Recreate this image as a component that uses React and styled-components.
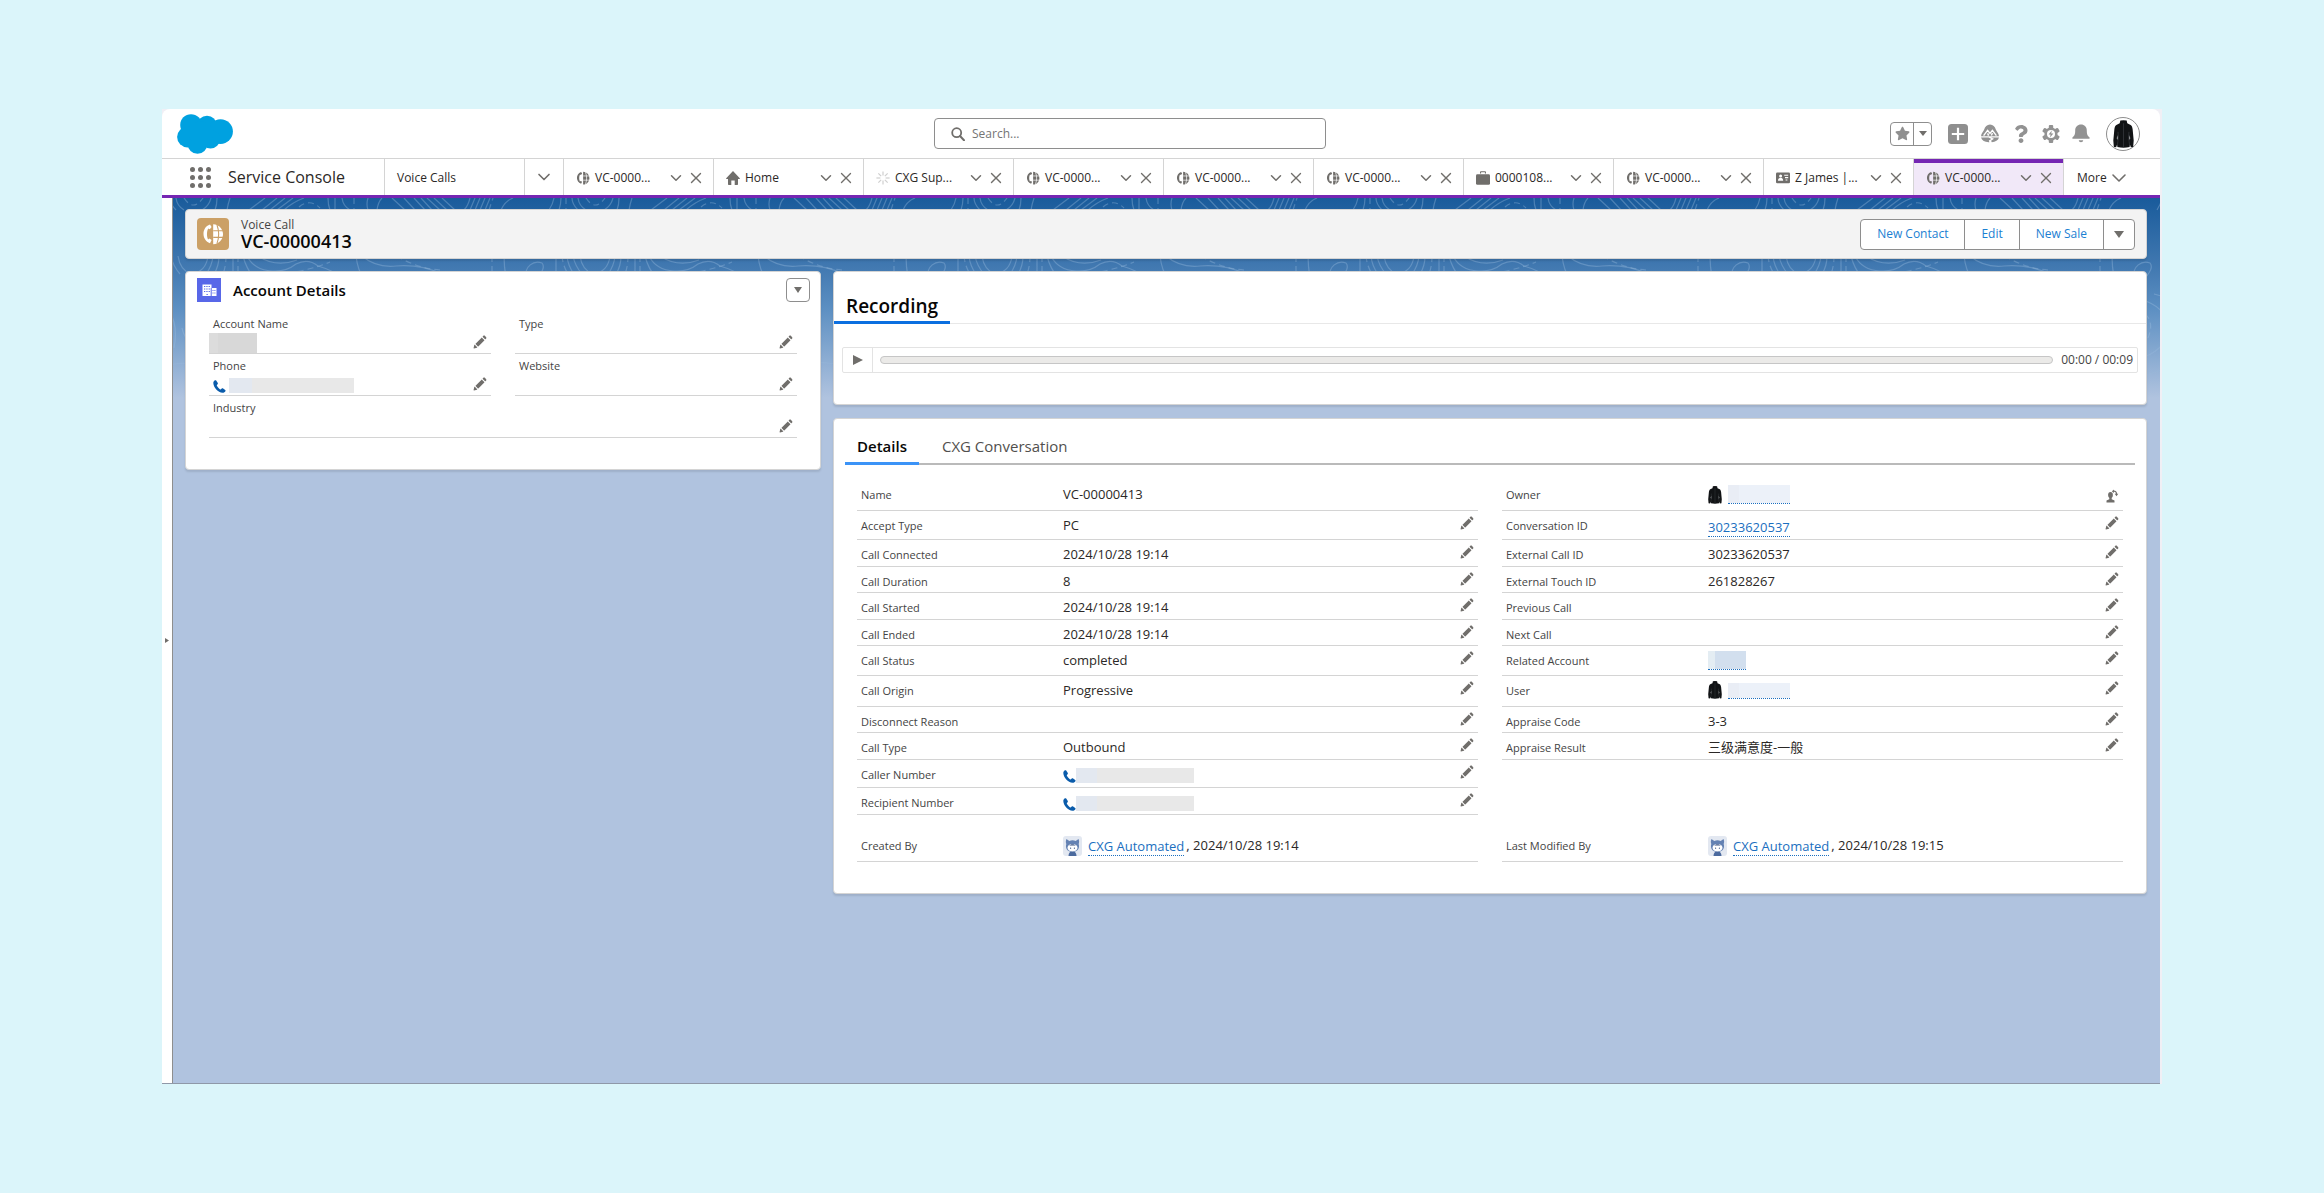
import React from 'react'
import styled, { createGlobalStyle, css } from 'styled-components'
import { ChevronDown, X } from 'lucide-react'
import { FaStar, FaQuestion } from 'react-icons/fa'

const BORDER_COLOR = '#d4d4d4'
const BRAND_PURPLE = '#7526b3'
const LINK_COLOR = '#1b6fc0'
const ICON_COLOR = '#706e6b'

const GlobalStyle = createGlobalStyle`
  * {
    box-sizing: border-box;
  }

  body {
    margin: 0;
    background: #dbf5fa;
    color: #2b2826;
    font-family: 'Open Sans', 'Noto Sans CJK SC', sans-serif;
    font-size: 13px;
    line-height: 18px;
  }

  button,
  input {
    font: inherit;
    color: inherit;
  }

  button {
    padding: 0;
    border: 0;
    background: none;
    cursor: pointer;
  }

  h1,
  h2,
  p,
  dl,
  dd {
    margin: 0;
  }

  svg {
    display: block;
    flex: none;
  }
`

/* icons */

function PencilIcon() {
  return (
    <svg width="14" height="14" viewBox="0 0 52 52" fill={ICON_COLOR}>
      <path d="M9.5 33.4l8.9 8.9c.4.4 1 .4 1.4 0L42 20c.4-.4.4-1 0-1.4l-8.8-8.8c-.4-.4-1-.4-1.4 0L9.5 32.1c-.4.4-.4 1 0 1.3z" />
      <path d="M36.1 5.7c-.4.4-.4 1 0 1.4l8.8 8.8c.4.4 1 .4 1.4 0l2.5-2.5c1.600-1.500 1.600-3.900 0-5.500l-4.700-4.700c-1.600-1.600-4.100-1.600-5.700 0z" />
      <path d="M2.100 48.200c-.2 1 .7 1.900 1.700 1.700l10.900-2.600c.4-.1.7-.3.9-.5.4-.4.5-1.100.1-1.500l-9-9c-.4-.4-1.100-.3-1.500.1-.3.300-.4.600-.5.900z" />
    </svg>
  )
}

function ChangeOwnerIcon() {
  return (
    <svg width="14" height="18" viewBox="0 -4 13 18" fill={ICON_COLOR}>
      <ellipse cx="5" cy="6" rx="2.4" ry="3" />
      <path d="M3.8 8h2.4v2.2L9 11.4V13.6H1v-2.2l2.8-1.2z" />
      <path
        d="M7.4 2.2C9.8 1.6 11 3 11 5"
        fill="none"
        stroke={ICON_COLOR}
        strokeWidth="1.3"
      />
      <path d="M9.2 4.8h3.6L11 7.2zM6.4 2.4L8.4.6v3.4z" />
    </svg>
  )
}

function VoiceCallIcon({ size = 32, color = '#fff', line = '#cba066' }) {
  return (
    <svg width={size} height={size} viewBox="5 5 22 22">
      <path
        d="M13 6.5C8.500 8 6.400 12 6.500 16c.1 4 2.300 7.600 6.500 9.200l1.600-3.200-2.200-1.400-1.300.8c-1.500-2.400-1.500-8.400.2-10.800l1.500.6 1.800-2.200z"
        fill={color}
      />
      <path d="M16.200 6.200c6 .4 9.800 5 9.800 10s-3.800 9.800-9.800 10z" fill={color} />
      <path
        d="M20 7c2.200 6 2.200 12.500 0 18.400M16.200 12.800h9.800M16.200 19.400h9.800"
        fill="none"
        stroke={line}
        strokeWidth="1.100"
      />
    </svg>
  )
}

function HomeIcon() {
  return (
    <svg width="14" height="14" viewBox="0 0 14 14" fill={ICON_COLOR}>
      <path d="M7 0L.2 7.200c-.3.400-.1.700.3.700H2v5.400c0 .4.300.7.700.7h2.600V9.400h3.400V14h2.600c.4 0 .7-.3.7-.7V7.900h1.500c.4 0 .6-.3.300-.7z" />
    </svg>
  )
}

function SpinnerIcon() {
  return (
    <svg width="14" height="14" viewBox="0 0 14 14" stroke="#cfcfcf" strokeWidth="1.200">
      {[0, 45, 90, 135, 180, 225, 270, 315].map(angle => (
        <path key={angle} d="M7 .4v4" transform={`rotate(${angle} 7 7)`} />
      ))}
    </svg>
  )
}

function CaseIcon() {
  return (
    <svg width="14" height="14" viewBox="0 0 14 14" fill={ICON_COLOR}>
      <path d="M4 2.400V1.400C4 .700 4.500.2 5.200.2h3.600c.7 0 1.200.5 1.200 1.200v1H8.900V1.300H5.100v1.100z" />
      <rect y="3.200" width="14" height="10.600" rx="1.400" />
    </svg>
  )
}

function ContactIcon() {
  return (
    <svg width="14" height="14" viewBox="0 0 14 14">
      <rect y="1.600" width="14" height="10.600" rx="1.200" fill={ICON_COLOR} />
      <circle cx="4.600" cy="5" r="1.500" fill="#fff" />
      <path d="M2 9.800c0-2 1.200-3 2.600-3s2.600 1 2.600 3z" fill="#fff" />
      <path d="M8.200 4.200h4M9 6.600h3.200M9.600 9h1.800" stroke="#fff" strokeWidth="1.100" />
    </svg>
  )
}

function PhoneIcon() {
  return (
    <svg width="13" height="13" viewBox="0 0 13 13" fill="#0b5cab">
      <path d="M2.200.3C1.200.6.3 1.700.3 3c.3 4.800 4.600 9.500 9.300 9.700 1.300 0 2.500-.8 2.900-1.800.1-.4 0-.7-.3-.9L9.800 8.300c-.3-.2-.7-.2-1 .1l-1 .9c-.2.200-.5.200-.7.100C5.600 8.500 4.400 7 3.800 5.600c-.1-.3 0-.5.200-.7l.7-.8c.3-.3.300-.6.100-1L3.200.600C3 .3 2.600.2 2.200.3z" />
    </svg>
  )
}

function JacketIcon({ width = 14, height = 18 }) {
  return (
    <svg width={width} height={height} viewBox="0 0 20 26" preserveAspectRatio="none">
      <path
        d="M7 .5Q10 -.2 13 .5l.6 2.600 3.200 1.500c1.300.8 1.600 2.200 1.900 4l1 10.400-.5 6-2.200.4-.9-2.600-.3 2.200c-3.800.9-7.800.9-11.600 0l-.3-2.200-.9 2.600-2.200-.4-.5-6 1-10.400c.3-1.800.6-3.200 1.900-4l3.200-1.500z"
        fill="#111315"
      />
      <path
        d="M10 3v22M4.800 11c.3 4 .1 8-.6 12M15.200 11c-.3 4-.1 8 .6 12"
        fill="none"
        stroke="#3d4145"
        strokeWidth=".6"
      />
      <path d="M3.400 17l1.400-3v4.500zM16.600 17l-1.400-3v4.500z" fill="#8a8c8e" />
    </svg>
  )
}

function AstroIcon() {
  return (
    <svg width="19" height="20" viewBox="0 0 19 20">
      <rect width="19" height="20" rx="3" fill="#e3e8f1" />
      <path
        d="M3.500 3l2.800 2c2-.9 4.400-.9 6.400 0l2.800-2c.8 1.400.8 3.400.2 5 1.200 4-.8 8-6.200 8s-7.400-4-6.200-8c-.6-1.600-.6-3.600.2-5z"
        fill="#6482b3"
      />
      <path d="M5.500 20c0-3 1.600-5 4-5s4 2 4 5z" fill="#4b6a9e" />
      <ellipse cx="9.500" cy="11.800" rx="5" ry="3.800" fill="#fff" />
      <path d="M6 9.600c2-1 2-1.400 3.500-1.400s1.500.4 3.500 1.400z" fill="#3d5684" />
      <circle cx="7.600" cy="12.200" r=".6" fill="#3d5684" />
      <circle cx="11.400" cy="12.200" r=".6" fill="#3d5684" />
    </svg>
  )
}

function CloudLogo() {
  return (
    <svg width="56" height="40" viewBox="0 0 56 40" fill="#00a1e0">
      <circle cx="14" cy="11" r="10.800" />
      <circle cx="30" cy="11.500" r="9.800" />
      <circle cx="43.500" cy="17.600" r="12.400" />
      <circle cx="10.500" cy="23" r="10.400" />
      <circle cx="20.500" cy="30" r="9.800" />
      <circle cx="33.500" cy="25" r="9.500" />
      <circle cx="24" cy="19" r="12" />
    </svg>
  )
}

function WaffleIcon() {
  const steps = [2.5, 10.5, 18.5]
  return (
    <svg width="21" height="21" viewBox="0 0 21 21" fill={ICON_COLOR}>
      {steps.map(y => steps.map(x => <circle key={`${x}-${y}`} cx={x} cy={y} r="2.500" />))}
    </svg>
  )
}

function TrailheadIcon() {
  return (
    <svg width="20" height="19" viewBox="0 0 20 19">
      <path
        d="M1 12.200C1.400 9 3.400 7.800 4.200 5.600 5 3 7 .6 10 .6s5 2.400 5.800 5c.8 2.200 2.800 3.400 3.200 6.600z"
        fill="#929292"
      />
      <path
        d="M3.600 11.600l4-5.200 2.400 3 2.400-3 4 5.200M7.600 9.400l1 2.200M12.400 9l-1 2.400"
        fill="none"
        stroke="#fff"
        strokeWidth="1.400"
      />
      <path d="M1 13.600h7.600l2.800 1.400-2.600 1.600.6 1.600C5 18.400 2 16.800 1 13.600z" fill="#929292" />
      <path d="M11 13.600h8c-.8 2.800-3.600 4.600-7.200 4.700l-.7-1.500 2.900-2z" fill="#929292" />
    </svg>
  )
}

function SetupIcon() {
  return (
    <svg width="18" height="18" viewBox="0 0 18 18">
      {[0, 60, 120, 180, 240, 300].map(angle => (
        <rect
          key={angle}
          x="6.800"
          width="4.400"
          height="5"
          rx="1"
          fill="#929292"
          transform={`rotate(${angle} 9 9)`}
        />
      ))}
      <circle cx="9" cy="9" r="6.600" fill="#929292" />
      <circle cx="9" cy="9" r="4" fill="#fff" />
      <path d="M9.800 5.600L6.600 9.600h2L8 12.400l3.400-4H9.200z" fill="#929292" />
    </svg>
  )
}

function BellIcon() {
  return (
    <svg width="18" height="19" viewBox="0 0 18 19" fill="#929292">
      <path d="M9 .6C5.600.6 3.200 3 3.200 6.400c0 4.200-1 5.600-2.600 6.800-.4.400-.3 1.600.4 1.600h16c.7 0 .8-1.200.4-1.600-1.600-1.200-2.600-2.600-2.600-6.800C14.800 3 12.400.6 9 .6z" />
      <path d="M6.800 16.200h4.400c0 1.200-1 2-2.200 2s-2.200-.8-2.200-2z" />
    </svg>
  )
}

function PlusSquareIcon() {
  return (
    <svg width="20" height="20" viewBox="0 0 20 20">
      <rect width="20" height="20" rx="3.500" fill="#8f8f8f" />
      <path d="M10 3.800v12.400M3.800 10h12.400" stroke="#fff" strokeWidth="2.200" />
    </svg>
  )
}

function AccountIcon() {
  return (
    <svg width="15" height="13" viewBox="0 0 15 13">
      <path d="M.5.500h9v3.500h5V12H.5z" fill="#fff" />
      <path d="M9.200 4v8.500" stroke="#5867e8" strokeWidth="1" />
      <path
        d="M2 2.500h1.300M4.300 2.500h1.300M6.600 2.500h1.300M2 5h1.300M4.300 5h1.300M6.600 5h1.300M2 7.500h1.300M4.300 7.500h1.300M6.600 7.500h1.300M10.500 6.500h1M12.400 6.500h1M10.500 9h1M12.400 9h1M4.500 10.500h1.300"
        stroke="#5867e8"
        strokeWidth="1.200"
      />
    </svg>
  )
}

function SearchIcon() {
  return (
    <svg width="14" height="14" viewBox="0 0 14 14" fill="none" stroke={ICON_COLOR}>
      <circle cx="5.700" cy="5.700" r="4.500" strokeWidth="1.800" />
      <path d="M9 9l4 4.200" strokeWidth="2" strokeLinecap="round" />
    </svg>
  )
}

function Triangle({ direction = 'down', width = 10, height = 7 }) {
  return (
    <svg
      width={width}
      height={height}
      viewBox="0 0 10 10"
      preserveAspectRatio="none"
      fill={ICON_COLOR}
    >
      <path d={direction === 'down' ? 'M0 0h10L5 10z' : 'M0 0l10 5L0 10z'} />
    </svg>
  )
}

/* contour lines drawn behind the cards */

const ContourSvg = styled.svg`
  position: absolute;
  top: 0;
  left: 0;
  width: 100%;
  height: 200px;
`

function Contours() {
  return (
    <ContourSvg aria-hidden="true">
      <defs>
        <linearGradient id="fade" x1="0" y1="0" x2="0" y2="1">
          <stop offset="0.700" stopColor="#fff" />
          <stop offset="1" stopColor="#000" />
        </linearGradient>
        <mask id="fade-mask">
          <rect width="100%" height="200" fill="url(#fade)" />
        </mask>
        <pattern id="contour" x="325" width="402" height="200" patternUnits="userSpaceOnUse">
          <g fill="none" stroke="#9fc0e2" strokeOpacity=".36" strokeWidth="1.200">
            <path d="M3 12Q7 3 15 0M51 12Q55 6 56 0M61 12Q63 6 63 0M74 0Q74 6 80 12M80 0Q81 8 88 12M115 0Q113 8 106 12M121 0Q121 7 119 12M134 0Q132 6 131 12" />
            <path d="M153 12L169 0M166 12L181 0M174 12L189 0M181 12L197 0M188 12Q197 4 208 0M232 0Q232 7 234 12M239 0v12M246 0Q247 8 254 12M272 0Q270 6 272 12M281 12Q282 4 286 0" />
            <path d="M296 0L309 12M308 0L319 12M318 0L329 12M325 0L336 12M331 0L344 12M338 0L351 12M346 0L359 12M368 12Q372 8 374 0M374 12L379 0M379 12L384 0M384 12L389 0M389 12L394 0" />
            <path d="M6 58Q6 68 8 80M28 80C26 68 36 62 44 65C48 70 42 76 38 82M58 58v20M69 58Q70 68 76 76M75 58Q77 68 84 76M82 58Q84 72 95 76Q110 74 112 58M117 58Q116 68 110 76M123 58Q123 68 118 76M137 58v18M147 58Q150 70 158 80" />
            <path d="M151 58Q158 72 176 73Q190 74 200 66M162 58Q180 70 201 62M200 66Q212 60 222 68Q236 72 247 80M260 58Q262 74 268 80M266 58Q280 70 300 68Q324 66 346 76M409 58Q406 68 410 78" />
            <path d="M0 100C30 96 60 104 62 130S20 170 0 160M402 100C380 96 350 100 348 126S380 166 402 160M90 90C130 80 176 120 150 150S90 150 86 130M182 90C230 90 250 120 236 150S190 180 178 160" />
            <path d="M236 92C270 86 300 112 290 136S250 160 240 140M60 170C120 150 200 200 260 176S360 170 402 186M0 186C20 190 40 176 60 170M48 96C70 100 84 120 78 150" />
            <g strokeDasharray="6 4">
              <path d="M68 0v12M88 0Q97 14 107 0M203 9Q214 0 224 10M258 0v12M393 12L397 0M64 58Q65 68 70 76M130 58Q130 68 127 76M142 58v18" />
              <path d="M172 78Q210 74 234 64M301 58Q320 70 344 72M396 58v20M20 112C44 110 50 126 40 144S12 150 0 148M250 100C276 104 282 130 262 146M110 160Q160 190 220 150" />
            </g>
          </g>
        </pattern>
      </defs>
      <rect width="100%" height="200" fill="url(#contour)" mask="url(#fade-mask)" />
    </ContourSvg>
  )
}

/* shell */

const Page = styled.div`
  display: flex;
  min-height: 100vh;
  padding: 109px 162px;
`

const Frame = styled.div`
  display: flex;
  flex: 1;
  min-width: 0;
  padding-right: 2px;
  background: #f0eff5;
`

const Shell = styled.div`
  display: flex;
  flex: 1;
  flex-direction: column;
  min-width: 0;
  border-radius: 8px 8px 0 0;
  background: #fff;
`

const TopBar = styled.header`
  display: grid;
  grid-template-columns: 757fr 392px 814fr;
  align-items: center;
  height: 50px;
  padding: 0 20px 0 15px;
  border-bottom: 1px solid ${BORDER_COLOR};
`

const SearchBox = styled.label`
  display: flex;
  align-items: center;
  gap: 7px;
  height: 31px;
  padding: 0 16px;
  border: 1px solid #8e8e8e;
  border-radius: 4px;

  input {
    flex: 1;
    min-width: 0;
    padding: 0;
    border: 0;
    outline: 0;
    font-size: 12px;
  }

  input::placeholder {
    color: #747474;
    opacity: 1;
  }
`

const Actions = styled.div`
  display: flex;
  align-items: center;
  justify-content: flex-end;
  gap: 12px;
`

const Favorites = styled.div`
  display: flex;
  height: 24px;
  margin-right: 4px;
  border: 1px solid #8e8e8e;
  border-radius: 4px;

  button {
    display: flex;
    align-items: center;
    justify-content: center;
    width: 17px;
  }

  button:first-child {
    width: 23px;
    border-right: 1px solid #8e8e8e;
  }
`

const IconButton = styled.button`
  display: flex;
  align-items: center;
  justify-content: center;
`

const AvatarButton = styled(IconButton)`
  width: 34px;
  height: 34px;
  margin-left: 4px;
  border: 1px solid #8e8e8e;
  border-radius: 50%;
`

const NavBar = styled.nav`
  display: flex;
  height: 39px;
  border-bottom: 3px solid ${BRAND_PURPLE};
`

const AppName = styled.div`
  display: flex;
  align-items: center;
  gap: 17px;
  width: 222px;
  padding-left: 28px;
  font-size: 16px;
`

const NavItem = styled.div`
  display: flex;
  align-items: center;
  width: 140px;
  padding: 2px 0 0 12px;
  border-left: 1px solid ${BORDER_COLOR};
  font-size: 12px;

  a {
    color: inherit;
    text-decoration: none;
  }
`

const NavMenu = styled.button`
  display: flex;
  align-items: center;
  justify-content: center;
  width: 39px;
  border-left: 1px solid ${BORDER_COLOR};
`

const TabItem = styled.div`
  display: flex;
  flex: 1;
  align-items: center;
  min-width: 0;
  padding: 2px 8px 0 12px;
  border-left: 1px solid ${BORDER_COLOR};
  font-size: 12px;

  a {
    display: flex;
    flex: 1;
    align-items: center;
    gap: 5px;
    min-width: 0;
    color: inherit;
    text-decoration: none;
    white-space: nowrap;
  }

  button + button {
    margin-left: 2px;
  }

  ${props =>
    props.$active &&
    css`
      background: #f1e8f8;
      box-shadow: inset 0 4px ${BRAND_PURPLE};
    `}
`

const MoreButton = styled.button`
  display: flex;
  align-items: center;
  width: 97px;
  padding: 2px 0 0 13px;
  border-left: 1px solid ${BORDER_COLOR};
  font-size: 12px;
`

const Workspace = styled.div`
  display: flex;
  flex: 1;
  border-bottom: 1px solid #8f98a8;
`

const Rail = styled.div`
  display: flex;
  align-items: center;
  justify-content: center;
  width: 11px;
  border-right: 1px solid #8e8e8e;
`

const Canvas = styled.main`
  position: relative;
  flex: 1;
  min-width: 0;
  padding: 11px 13px 11px 12px;
  background: linear-gradient(#195b9b 0, #4279b1 70px, #5c8fc2 110px, #b0c3df 200px);
`

const Layers = styled.div`
  position: relative;
`

const Columns = styled.div`
  display: grid;
  grid-template-columns: 636fr 1314fr;
  align-items: start;
  gap: 12px;
  margin-top: 12px;
`

const Stack = styled.div`
  display: grid;
  gap: 13px;
`

const Card = styled.section`
  border: 1px solid ${BORDER_COLOR};
  border-radius: 4px;
  background: #fff;
  box-shadow: 0 2px 2px rgba(0, 0, 0, 0.1);
`

/* record header */

const RecordHeader = styled(Card)`
  display: flex;
  align-items: center;
  gap: 12px;
  height: 50px;
  padding: 0 11px;
  background: #f3f3f3;

  h1 {
    color: #080707;
    font-size: 18px;
    font-weight: 600;
    line-height: 18px;
  }

  p {
    font-size: 12px;
    line-height: 14px;
    color: #444;
  }
`

const RecordIcon = styled.span`
  display: flex;
  align-items: center;
  justify-content: center;
  width: 32px;
  height: 32px;
  border-radius: 4px;
  background: #cba066;
`

const ButtonGroup = styled.div`
  display: flex;
  height: 31px;
  margin-left: auto;
  border: 1px solid #8e8e8e;
  border-radius: 4px;
  background: #fff;
  color: #1b80d2;
  font-size: 12px;

  button {
    display: flex;
    align-items: center;
    padding: 0 16px;
  }

  button + button {
    border-left: 1px solid #8e8e8e;
  }

  button:last-child {
    padding: 0 10px;
  }
`

/* account card */

const AccountCard = styled(Card)`
  height: 199px;
`

const CardTitle = styled.div`
  display: flex;
  align-items: center;
  gap: 12px;
  padding: 6px 10px 0 11px;

  h2 {
    flex: 1;
    color: #080707;
    font-size: 15px;
    font-weight: 600;
    line-height: 24px;
  }
`

const CardIcon = styled.span`
  display: flex;
  align-items: center;
  justify-content: center;
  width: 24px;
  height: 24px;
  background: #5867e8;
`

const MenuButton = styled(IconButton)`
  width: 24px;
  height: 24px;
  border: 1px solid #8e8e8e;
  border-radius: 4px;
`

const AccountFields = styled.dl`
  display: grid;
  grid-template-columns: 1fr 1fr;
  column-gap: 24px;
  padding: 10px 23px 0;
`

const AccountField = styled.div`
  display: flex;
  flex-direction: column;
  grid-column: ${props => (props.$wide ? 'span 2' : 'auto')};
  height: 42px;
  border-bottom: 1px solid ${BORDER_COLOR};

  dt {
    padding: 3px 0 0 4px;
    color: #444;
    font-size: 11px;
    line-height: 18px;
  }

  dd {
    display: flex;
    flex: 1;
    align-items: flex-start;
    padding-right: 4px;
  }

  button {
    height: 18px;
    margin-left: auto;
  }
`

const PhoneValue = styled.span`
  display: flex;
  align-items: flex-end;
  gap: ${props => (props.$inset ? 3 : 0)}px;
  height: 18px;
  padding-left: ${props => (props.$inset ? 4 : 0)}px;
`

/* a value hidden behind grey blocks */
const Redacted = styled.span`
  display: block;
  width: ${props => props.$width}px;
  height: ${props => props.$height}px;
  background: linear-gradient(90deg, ${props => props.$from} 18%, ${props => props.$to} 18%);
`

/* recording card */

const RecordingCard = styled(Card)`
  height: 134px;
`

const RecordingTitle = styled.div`
  height: 52px;
  border-bottom: 1px solid #e8e8e8;

  h2 {
    display: inline-block;
    height: 52px;
    padding: 22px 12px 0;
    border-bottom: 3px solid #0b6fe0;
    color: #080707;
    font-size: 19px;
    font-weight: 600;
    line-height: 24px;
  }
`

const Player = styled.div`
  display: flex;
  align-items: center;
  height: 26px;
  margin: 23px 8px 0;
  border: 1px solid #e3e3e3;
  border-radius: 2px;
  color: #444;
  font-size: 12px;

  > button {
    display: flex;
    align-items: center;
    justify-content: center;
    width: 30px;
    height: 24px;
    border-right: 1px solid #e3e3e3;
  }

  > span {
    padding: 0 4px 0 8px;
  }
`

const SeekBar = styled.input`
  flex: 1;
  height: 8px;
  margin: 0 0 0 7px;
  border: 1px solid #c6c6c6;
  border-radius: 4px;
  background: #ebeae8;
  appearance: none;

  &::-webkit-slider-thumb {
    width: 0;
    appearance: none;
  }
`

/* details card */

const DetailsCard = styled(Card)`
  padding: 11px 11px 31px;
`

const TabList = styled.div`
  display: flex;
  height: 35px;
  margin-bottom: 15px;
  border-bottom: 2px solid #bababa;
`

const TabButton = styled.button`
  height: 35px;
  padding: 0 12px;
  border-bottom: 3px solid ${props => (props.$active ? '#3b93f7' : 'transparent')};
  color: ${props => (props.$active ? '#080707' : '#514f4d')};
  font-size: 15px;
  font-weight: ${props => (props.$active ? 600 : 400)};

  & + & {
    margin-left: 11px;
  }
`

const DetailColumns = styled.div`
  display: grid;
  grid-template-columns: 1fr 1fr;
  column-gap: 24px;
  margin-bottom: ${props => (props.$last ? 0 : 16)}px;
  padding: 0 12px;
`

const DetailRow = styled.div`
  display: grid;
  grid-template-columns: 202px 1fr auto;
  height: ${props => props.$height}px;
  padding: 0 4px;
  border-bottom: 1px solid ${BORDER_COLOR};

  dt {
    padding-top: 6px;
    color: #444;
    font-size: 11px;
    line-height: 18px;
  }

  dd {
    display: flex;
    align-items: flex-start;
    padding-top: 5px;
  }

  dd > a {
    padding-top: 3px;
  }

  > button {
    align-self: start;
    padding-top: 5px;
  }
`

const TextLink = styled.a`
  border-bottom: 1px dotted ${LINK_COLOR};
  color: ${LINK_COLOR};
  line-height: 17px;
  text-decoration: none;
`

const UserValue = styled.span`
  display: flex;
  align-items: flex-end;
  gap: 6px;

  time {
    align-self: flex-start;
    margin-left: -4px;
  }
`

function Redact({ width, height = 15, from = '#e3e8f0', to = '#e8e8e8' }) {
  return <Redacted $width={width} $height={height} $from={from} $to={to} />
}

function PhoneNumber({ width, inset }) {
  return (
    <PhoneValue $inset={inset}>
      <PhoneIcon />
      <Redact width={width} />
    </PhoneValue>
  )
}

function HiddenUser({ height }) {
  return (
    <UserValue>
      <JacketIcon />
      <TextLink href="#user" aria-label="User">
        <Redact width={62} height={height} from="#e9edf5" to="#ecf1f9" />
      </TextLink>
    </UserValue>
  )
}

function Automated({ date }) {
  return (
    <UserValue>
      <AstroIcon />
      <TextLink href="#cxg">CXG Automated</TextLink>
      <time>, {date}</time>
    </UserValue>
  )
}

const tabs = [
  { title: 'VC-0000...', icon: 'voice' },
  { title: 'Home', icon: 'home' },
  { title: 'CXG Sup...', icon: 'spinner' },
  { title: 'VC-0000...', icon: 'voice' },
  { title: 'VC-0000...', icon: 'voice' },
  { title: 'VC-0000...', icon: 'voice' },
  { title: '0000108...', icon: 'case' },
  { title: 'VC-0000...', icon: 'voice' },
  { title: 'Z James |...', icon: 'contact' },
  { title: 'VC-0000...', icon: 'voice', active: true },
]

const tabIcons = {
  voice: <VoiceCallIcon size={14} color={ICON_COLOR} line="#fff" />,
  home: <HomeIcon />,
  spinner: <SpinnerIcon />,
  case: <CaseIcon />,
  contact: <ContactIcon />,
}

const leftRows = [
  { label: 'Name', value: 'VC-00000413', height: 31, readOnly: true },
  { label: 'Accept Type', value: 'PC', height: 29 },
  { label: 'Call Connected', value: '2024/10/28 19:14', height: 27 },
  { label: 'Call Duration', value: '8', height: 26 },
  { label: 'Call Started', value: '2024/10/28 19:14', height: 27 },
  { label: 'Call Ended', value: '2024/10/28 19:14', height: 26 },
  { label: 'Call Status', value: 'completed', height: 30 },
  { label: 'Call Origin', value: 'Progressive', height: 31 },
  { label: 'Disconnect Reason', height: 26 },
  { label: 'Call Type', value: 'Outbound', height: 27 },
  { label: 'Caller Number', value: <PhoneNumber width={118} />, height: 28 },
  { label: 'Recipient Number', value: <PhoneNumber width={118} />, height: 27 },
]

const rightRows = [
  { label: 'Owner', value: <HiddenUser height={18} />, height: 31, owner: true },
  {
    label: 'Conversation ID',
    value: <TextLink href="#conversation">30233620537</TextLink>,
    height: 29,
  },
  { label: 'External Call ID', value: '30233620537', height: 27 },
  { label: 'External Touch ID', value: '261828267', height: 26 },
  { label: 'Previous Call', height: 27 },
  { label: 'Next Call', height: 26 },
  {
    label: 'Related Account',
    value: (
      <UserValue>
        <TextLink href="#account" aria-label="Account">
          <Redact width={38} height={18} from="#e4edf3" to="#d2dfee" />
        </TextLink>
      </UserValue>
    ),
    height: 30,
  },
  { label: 'User', value: <HiddenUser height={15} />, height: 31 },
  { label: 'Appraise Code', value: '3-3', height: 26 },
  { label: 'Appraise Result', value: '三级满意度-一般', height: 27 },
]

function Rows({ rows }) {
  return (
    <dl>
      {rows.map(row => (
        <DetailRow key={row.label} $height={row.height}>
          <dt>{row.label}</dt>
          <dd>{row.value}</dd>
          {!row.readOnly && (
            <IconButton aria-label={`Edit ${row.label}`}>
              {row.owner ? <ChangeOwnerIcon /> : <PencilIcon />}
            </IconButton>
          )}
        </DetailRow>
      ))}
    </dl>
  )
}

function AccountRow({ label, wide, children }) {
  return (
    <AccountField $wide={wide}>
      <dt>{label}</dt>
      <dd>
        {children}
        <IconButton aria-label={`Edit ${label}`}>
          <PencilIcon />
        </IconButton>
      </dd>
    </AccountField>
  )
}

function Header() {
  return (
    <TopBar>
      <CloudLogo />
      <SearchBox>
        <SearchIcon />
        <input type="text" placeholder="Search..." aria-label="Search" />
      </SearchBox>
      <Actions>
        <Favorites>
          <button aria-label="Favorite">
            <FaStar size={15} color="#8f8f8f" />
          </button>
          <button aria-label="Favorites list">
            <Triangle width={8} height={5} />
          </button>
        </Favorites>
        <IconButton aria-label="Create">
          <PlusSquareIcon />
        </IconButton>
        <IconButton aria-label="Guidance">
          <TrailheadIcon />
        </IconButton>
        <IconButton aria-label="Help">
          <FaQuestion size={18} color="#929292" />
        </IconButton>
        <IconButton aria-label="Setup">
          <SetupIcon />
        </IconButton>
        <IconButton aria-label="Notifications">
          <BellIcon />
        </IconButton>
        <AvatarButton aria-label="Profile">
          <JacketIcon width={21} height={28} />
        </AvatarButton>
      </Actions>
    </TopBar>
  )
}

function Navigation() {
  return (
    <NavBar>
      <AppName>
        <IconButton aria-label="App launcher">
          <WaffleIcon />
        </IconButton>
        Service Console
      </AppName>
      <NavItem>
        <a href="#calls">Voice Calls</a>
      </NavItem>
      <NavMenu aria-label="Navigation menu">
        <ChevronDown size={20} color={ICON_COLOR} />
      </NavMenu>
      {tabs.map((tab, index) => (
        <TabItem key={index} $active={tab.active}>
          <a href={`#tab-${index}`}>
            {tabIcons[tab.icon]}
            {tab.title}
          </a>
          <button aria-label="Tab actions">
            <ChevronDown size={18} color={ICON_COLOR} />
          </button>
          <button aria-label="Close tab">
            <X size={18} color={ICON_COLOR} strokeWidth={1.8} />
          </button>
        </TabItem>
      ))}
      <MoreButton>
        More
        <ChevronDown size={24} color={ICON_COLOR} strokeWidth={1.6} />
      </MoreButton>
    </NavBar>
  )
}

function App() {
  return (
    <Page>
      <GlobalStyle />
      <Frame>
        <Shell>
          <Header />
          <Navigation />
          <Workspace>
            <Rail>
              <Triangle direction="right" width={4} height={5} />
            </Rail>
            <Canvas>
              <Contours />
              <Layers>
                <RecordHeader>
                  <RecordIcon>
                    <VoiceCallIcon size={22} />
                  </RecordIcon>
                  <div>
                    <p>Voice Call</p>
                    <h1>VC-00000413</h1>
                  </div>
                  <ButtonGroup>
                    <button>New Contact</button>
                    <button>Edit</button>
                    <button>New Sale</button>
                    <button aria-label="More actions">
                      <Triangle />
                    </button>
                  </ButtonGroup>
                </RecordHeader>
                <Columns>
                  <AccountCard>
                    <CardTitle>
                      <CardIcon>
                        <AccountIcon />
                      </CardIcon>
                      <h2>Account Details</h2>
                      <MenuButton aria-label="Account actions">
                        <Triangle width={8} height={6} />
                      </MenuButton>
                    </CardTitle>
                    <AccountFields>
                      <AccountRow label="Account Name">
                        <Redact width={48} height={20} from="#dcdcdc" to="#d8d8d8" />
                      </AccountRow>
                      <AccountRow label="Type" />
                      <AccountRow label="Phone">
                        <PhoneNumber width={125} inset />
                      </AccountRow>
                      <AccountRow label="Website" />
                      <AccountRow label="Industry" wide />
                    </AccountFields>
                  </AccountCard>
                  <Stack>
                    <RecordingCard>
                      <RecordingTitle>
                        <h2>Recording</h2>
                      </RecordingTitle>
                      <Player>
                        <button aria-label="Play">
                          <Triangle direction="right" width={10} height={10} />
                        </button>
                        <SeekBar type="range" min="0" max="9" defaultValue="0" aria-label="Seek" />
                        <span>00:00 / 00:09</span>
                      </Player>
                    </RecordingCard>
                    <DetailsCard>
                      <TabList role="tablist">
                        <TabButton role="tab" aria-selected="true" $active>
                          Details
                        </TabButton>
                        <TabButton role="tab" aria-selected="false">
                          CXG Conversation
                        </TabButton>
                      </TabList>
                      <DetailColumns>
                        <Rows rows={leftRows} />
                        <Rows rows={rightRows} />
                      </DetailColumns>
                      <DetailColumns $last>
                        <Rows
                          rows={[
                            {
                              label: 'Created By',
                              value: <Automated date="2024/10/28 19:14" />,
                              height: 31,
                              readOnly: true,
                            },
                          ]}
                        />
                        <Rows
                          rows={[
                            {
                              label: 'Last Modified By',
                              value: <Automated date="2024/10/28 19:15" />,
                              height: 31,
                              readOnly: true,
                            },
                          ]}
                        />
                      </DetailColumns>
                    </DetailsCard>
                  </Stack>
                </Columns>
              </Layers>
            </Canvas>
          </Workspace>
        </Shell>
      </Frame>
    </Page>
  )
}

export default App
